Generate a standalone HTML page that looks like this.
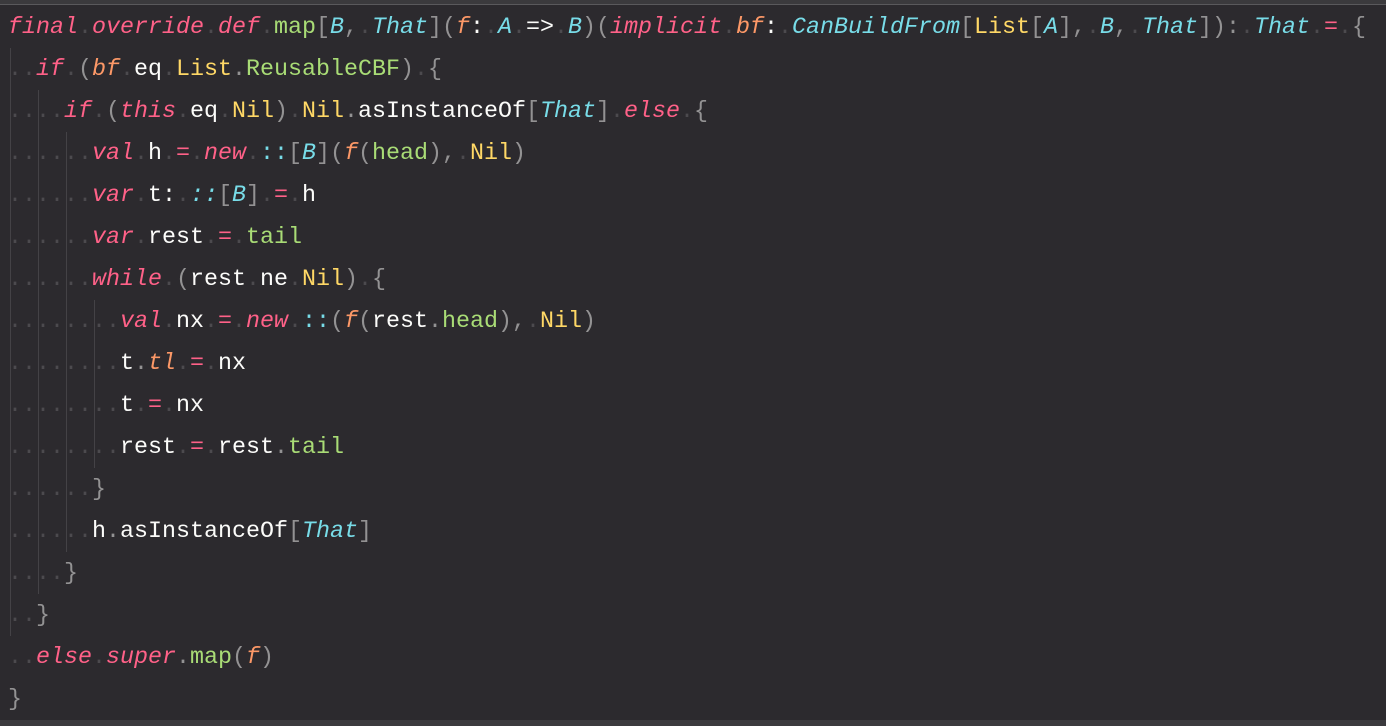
<!DOCTYPE html>
<html><head><meta charset="utf-8"><style>
html,body{margin:0;padding:0;}
body{width:1386px;height:726px;background:#2c2a2e;overflow:hidden;position:relative;
font-family:"Liberation Mono","DejaVu Sans Mono",monospace;font-size:23.33px;}
.top{position:absolute;left:0;top:0;width:1386px;height:4px;background:#3b3a3d;border-bottom:1px solid #5a595c;}
.bot{position:absolute;left:0;top:720px;width:1386px;height:6px;background:#3b3a3d;}
.code{position:absolute;left:8px;top:7px;white-space:pre;line-height:42px;color:#fcfcfa;}
.s{color:#4c4a4e;}
.k{color:#ff6188;font-style:italic;}
.o{color:#ff6188;}
.g{color:#a9dc76;}
.y{color:#ffd866;}
.c{color:#78dce8;font-style:italic;}
.cn{color:#78dce8;}
.a{color:#fc9867;font-style:italic;}
.p{color:#939293;}
.w{color:#fcfcfa;}
.gd{position:absolute;width:1px;background:#444246;}
</style></head><body>
<div class="top"></div>
<div class="gd" style="left:10px;top:48px;height:588px"></div>
<div class="gd" style="left:38px;top:90px;height:504px"></div>
<div class="gd" style="left:66px;top:132px;height:420px"></div>
<div class="gd" style="left:94px;top:300px;height:168px"></div>
<div class="code"><span class="k">final</span><span class="s">.</span><span class="k">override</span><span class="s">.</span><span class="k">def</span><span class="s">.</span><span class="g">map</span><span class="p">[</span><span class="c">B</span><span class="p">,</span><span class="s">.</span><span class="c">That</span><span class="p">](</span><span class="a">f</span><span class="w">:</span><span class="s">.</span><span class="c">A</span><span class="s">.</span><span class="w">=&gt;</span><span class="s">.</span><span class="c">B</span><span class="p">)(</span><span class="k">implicit</span><span class="s">.</span><span class="a">bf</span><span class="w">:</span><span class="s">.</span><span class="c">CanBuildFrom</span><span class="p">[</span><span class="y">List</span><span class="p">[</span><span class="c">A</span><span class="p">],</span><span class="s">.</span><span class="c">B</span><span class="p">,</span><span class="s">.</span><span class="c">That</span><span class="p">]):</span><span class="s">.</span><span class="c">That</span><span class="s">.</span><span class="o">=</span><span class="s">.</span><span class="p">{</span>
<span class="s">..</span><span class="k">if</span><span class="s">.</span><span class="p">(</span><span class="a">bf</span><span class="s">.</span>eq<span class="s">.</span><span class="y">List</span><span class="p">.</span><span class="g">ReusableCBF</span><span class="p">)</span><span class="s">.</span><span class="p">{</span>
<span class="s">....</span><span class="k">if</span><span class="s">.</span><span class="p">(</span><span class="k">this</span><span class="s">.</span>eq<span class="s">.</span><span class="y">Nil</span><span class="p">)</span><span class="s">.</span><span class="y">Nil</span><span class="p">.</span>asInstanceOf<span class="p">[</span><span class="c">That</span><span class="p">]</span><span class="s">.</span><span class="k">else</span><span class="s">.</span><span class="p">{</span>
<span class="s">......</span><span class="k">val</span><span class="s">.</span>h<span class="s">.</span><span class="o">=</span><span class="s">.</span><span class="k">new</span><span class="s">.</span><span class="cn">::</span><span class="p">[</span><span class="c">B</span><span class="p">](</span><span class="a">f</span><span class="p">(</span><span class="g">head</span><span class="p">),</span><span class="s">.</span><span class="y">Nil</span><span class="p">)</span>
<span class="s">......</span><span class="k">var</span><span class="s">.</span>t:<span class="s">.</span><span class="c">::</span><span class="p">[</span><span class="c">B</span><span class="p">]</span><span class="s">.</span><span class="o">=</span><span class="s">.</span>h
<span class="s">......</span><span class="k">var</span><span class="s">.</span>rest<span class="s">.</span><span class="o">=</span><span class="s">.</span><span class="g">tail</span>
<span class="s">......</span><span class="k">while</span><span class="s">.</span><span class="p">(</span>rest<span class="s">.</span>ne<span class="s">.</span><span class="y">Nil</span><span class="p">)</span><span class="s">.</span><span class="p">{</span>
<span class="s">........</span><span class="k">val</span><span class="s">.</span>nx<span class="s">.</span><span class="o">=</span><span class="s">.</span><span class="k">new</span><span class="s">.</span><span class="cn">::</span><span class="p">(</span><span class="a">f</span><span class="p">(</span>rest<span class="p">.</span><span class="g">head</span><span class="p">),</span><span class="s">.</span><span class="y">Nil</span><span class="p">)</span>
<span class="s">........</span>t<span class="p">.</span><span class="a">tl</span><span class="s">.</span><span class="o">=</span><span class="s">.</span>nx
<span class="s">........</span>t<span class="s">.</span><span class="o">=</span><span class="s">.</span>nx
<span class="s">........</span>rest<span class="s">.</span><span class="o">=</span><span class="s">.</span>rest<span class="p">.</span><span class="g">tail</span>
<span class="s">......</span><span class="p">}</span>
<span class="s">......</span>h<span class="p">.</span>asInstanceOf<span class="p">[</span><span class="c">That</span><span class="p">]</span>
<span class="s">....</span><span class="p">}</span>
<span class="s">..</span><span class="p">}</span>
<span class="s">..</span><span class="k">else</span><span class="s">.</span><span class="k">super</span><span class="p">.</span><span class="g">map</span><span class="p">(</span><span class="a">f</span><span class="p">)</span>
<span class="p">}</span></div>
<div class="bot"></div>
</body></html>
